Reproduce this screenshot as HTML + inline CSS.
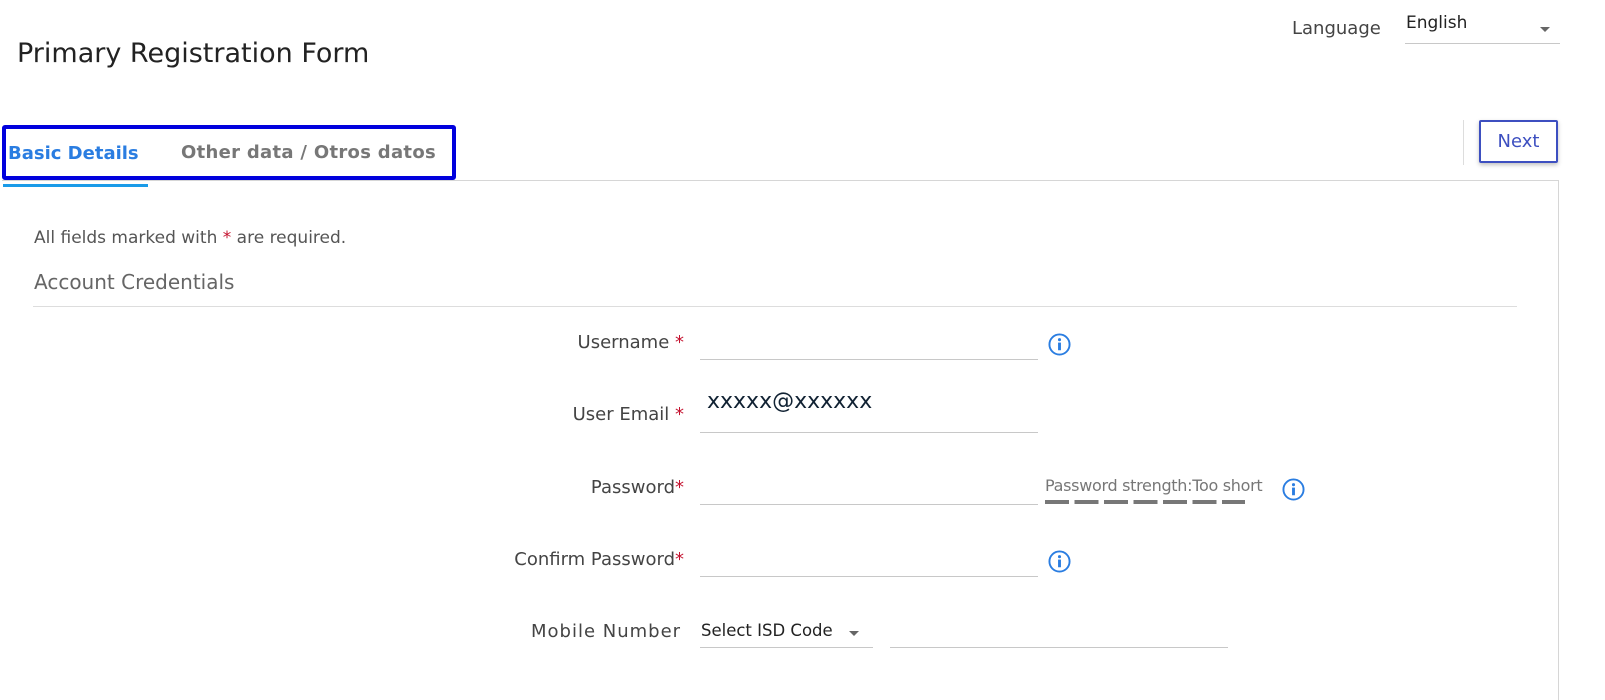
<!DOCTYPE html>
<html><head><meta charset="utf-8"><style>
*{margin:0;padding:0;box-sizing:border-box}
body{width:1605px;height:682px;background:#fff;font-family:"DejaVu Sans","Liberation Sans",sans-serif;position:relative;overflow:hidden;color:#333}
.a{position:absolute;white-space:nowrap}
.line{position:absolute;height:1px;background:#c8c8c8}
.lbl{position:absolute;right:921px;font-size:18px;color:#444;text-align:right;white-space:nowrap}
.st{color:#c4122f}
.info{position:absolute;width:23px;height:23px}
</style></head><body>
<div class="a" style="left:17px;top:38px;font-size:27px;color:#222">Primary Registration Form</div>
<div class="a" style="left:1292px;top:18px;font-size:18px;color:#444">Language</div>
<div class="a" style="left:1406px;top:13px;font-size:17px;color:#222">English</div>
<div class="line" style="left:1405px;top:43px;width:155px"></div>
<div class="a" style="left:1540px;top:27px;width:0;height:0;border-left:5px solid transparent;border-right:5px solid transparent;border-top:5px solid #666"></div>

<div class="a" style="left:1463px;top:120px;width:1px;height:45px;background:#ddd"></div>
<div class="a" style="left:1479px;top:120px;width:79px;height:43px;border:2px solid #3d4fc0;border-radius:2px;box-shadow:0 2px 4px rgba(0,0,0,.25);color:#3d4fc0;font-size:18px;text-align:center;line-height:39px">Next</div>

<div class="a" style="left:2px;top:180px;width:1557px;height:520px;border-top:1px solid #d6d6d6;border-right:1px solid #d6d6d6"></div>
<div class="a" style="left:3px;top:184px;width:145px;height:3px;background:#1a9be8"></div>
<div class="a" style="left:2px;top:125px;width:454px;height:55px;border:4px solid #0000dd;border-radius:3px;background:#fff"></div>
<div class="a" style="left:8px;top:143px;font-size:18px;font-weight:bold;color:#2a7de1">Basic Details</div>
<div class="a" style="left:181px;top:142px;font-size:18px;font-weight:bold;color:#777;letter-spacing:0.3px">Other data / Otros datos</div>

<div class="a" style="left:34px;top:228px;font-size:17px;color:#555">All fields marked with <span class="st">*</span> are required.</div>
<div class="a" style="left:34px;top:270px;font-size:20px;color:#666">Account Credentials</div>
<div class="line" style="left:33px;top:306px;width:1484px;background:#ddd"></div>

<div class="lbl" style="top:332px">Username <span class="st">*</span></div>
<div class="line" style="left:700px;top:359px;width:338px"></div>
<svg class="info" style="left:1048px;top:333px" viewBox="0 0 24 24"><circle cx="12" cy="12" r="10.5" fill="none" stroke="#2a7de1" stroke-width="2"/><circle cx="12" cy="7" r="1.6" fill="#2a7de1"/><rect x="10.5" y="10" width="3" height="8" fill="#2a7de1"/></svg>

<div class="lbl" style="top:404px">User Email <span class="st">*</span></div>
<div class="a" style="left:707px;top:389px;font-size:22px;color:#123">xxxxx@xxxxxx</div>
<div class="line" style="left:700px;top:432px;width:338px"></div>

<div class="lbl" style="top:477px">Password<span class="st">*</span></div>
<div class="line" style="left:700px;top:504px;width:338px"></div>
<div class="a" style="left:1045px;top:476px;font-size:16px;color:#777;letter-spacing:-0.3px">Password strength:Too short</div>
<div class="a" style="left:1045px;top:500px;width:200px;height:4px;background:repeating-linear-gradient(90deg,#777 0 24px,transparent 24px 29.5px)"></div>
<svg class="info" style="left:1282px;top:478px" viewBox="0 0 24 24"><circle cx="12" cy="12" r="10.5" fill="none" stroke="#2a7de1" stroke-width="2"/><circle cx="12" cy="7" r="1.6" fill="#2a7de1"/><rect x="10.5" y="10" width="3" height="8" fill="#2a7de1"/></svg>

<div class="lbl" style="top:549px">Confirm Password<span class="st">*</span></div>
<div class="line" style="left:700px;top:576px;width:338px"></div>
<svg class="info" style="left:1048px;top:550px" viewBox="0 0 24 24"><circle cx="12" cy="12" r="10.5" fill="none" stroke="#2a7de1" stroke-width="2"/><circle cx="12" cy="7" r="1.6" fill="#2a7de1"/><rect x="10.5" y="10" width="3" height="8" fill="#2a7de1"/></svg>

<div class="a" style="left:531px;top:621px;font-size:18px;color:#444;letter-spacing:1px">Mobile Number</div>
<div class="a" style="left:701px;top:621px;font-size:16.5px;color:#222">Select ISD Code</div>
<div class="a" style="left:849px;top:631px;width:0;height:0;border-left:5px solid transparent;border-right:5px solid transparent;border-top:5px solid #666"></div>
<div class="line" style="left:700px;top:647px;width:173px"></div>
<div class="line" style="left:890px;top:647px;width:338px"></div>
</body></html>
